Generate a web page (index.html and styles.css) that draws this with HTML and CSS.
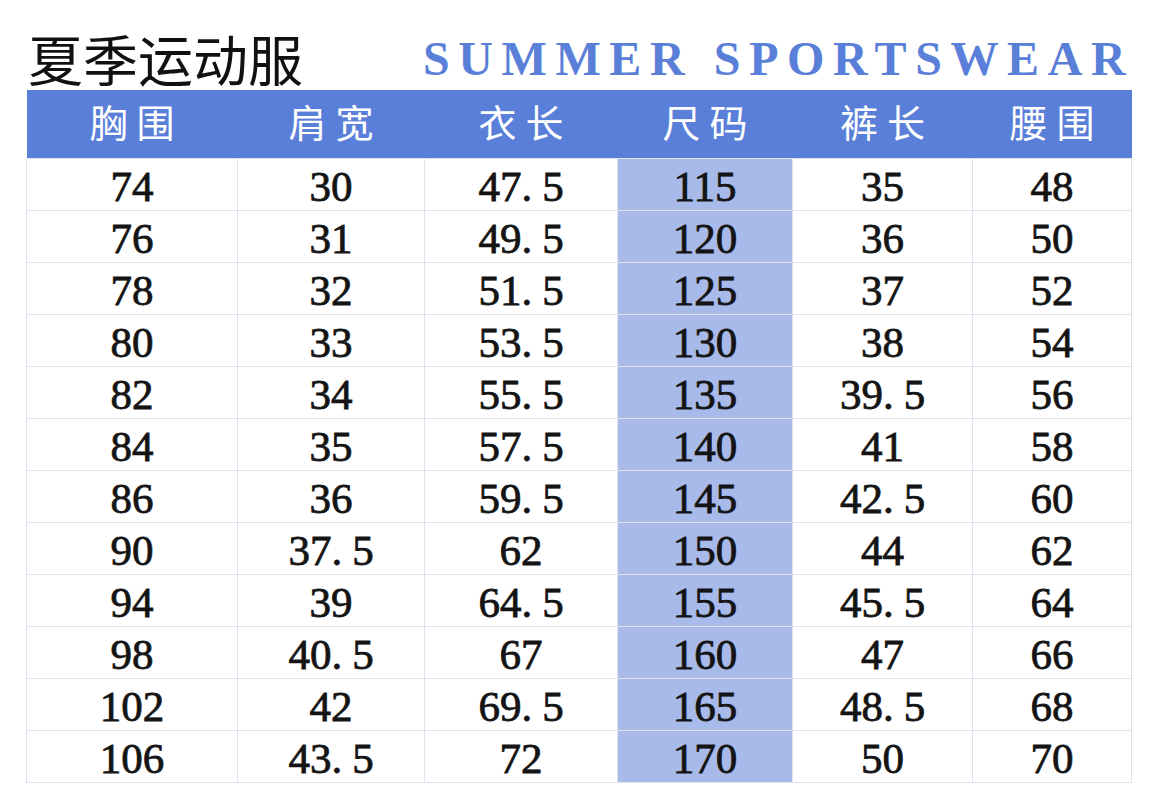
FILE: index.html
```html
<!DOCTYPE html>
<html lang="zh">
<head>
<meta charset="utf-8">
<title>夏季运动服 尺码表</title>
<link rel="stylesheet" href="styles.css">
</head>
<body>
<div class="page">
  <div class="titlebar">
    <h1 class="title-cn">夏季运动服</h1>
    <div class="title-en">SUMMER SPORTSWEAR</div>
  </div>
  <table class="sizes">
    <colgroup>
      <col class="c1"><col class="c2"><col class="c3"><col class="c4"><col class="c5"><col class="c6">
    </colgroup>
    <thead>
      <tr><th>胸围</th><th>肩宽</th><th>衣长</th><th>尺码</th><th>裤长</th><th>腰围</th></tr>
    </thead>
    <tbody>
      <tr><td>74</td><td>30</td><td>47<span class="dot">.</span>5</td><td class="size">115</td><td>35</td><td>48</td></tr>
      <tr><td>76</td><td>31</td><td>49<span class="dot">.</span>5</td><td class="size">120</td><td>36</td><td>50</td></tr>
      <tr><td>78</td><td>32</td><td>51<span class="dot">.</span>5</td><td class="size">125</td><td>37</td><td>52</td></tr>
      <tr><td>80</td><td>33</td><td>53<span class="dot">.</span>5</td><td class="size">130</td><td>38</td><td>54</td></tr>
      <tr><td>82</td><td>34</td><td>55<span class="dot">.</span>5</td><td class="size">135</td><td>39<span class="dot">.</span>5</td><td>56</td></tr>
      <tr><td>84</td><td>35</td><td>57<span class="dot">.</span>5</td><td class="size">140</td><td>41</td><td>58</td></tr>
      <tr><td>86</td><td>36</td><td>59<span class="dot">.</span>5</td><td class="size">145</td><td>42<span class="dot">.</span>5</td><td>60</td></tr>
      <tr><td>90</td><td>37<span class="dot">.</span>5</td><td>62</td><td class="size">150</td><td>44</td><td>62</td></tr>
      <tr><td>94</td><td>39</td><td>64<span class="dot">.</span>5</td><td class="size">155</td><td>45<span class="dot">.</span>5</td><td>64</td></tr>
      <tr><td>98</td><td>40<span class="dot">.</span>5</td><td>67</td><td class="size">160</td><td>47</td><td>66</td></tr>
      <tr><td>102</td><td>42</td><td>69<span class="dot">.</span>5</td><td class="size">165</td><td>48<span class="dot">.</span>5</td><td>68</td></tr>
      <tr><td>106</td><td>43<span class="dot">.</span>5</td><td>72</td><td class="size">170</td><td>50</td><td>70</td></tr>
    </tbody>
  </table>
</div>
</body>
</html>
```
FILE: styles.css
```css
html, body {
  margin: 0;
  padding: 0;
  background: #ffffff;
}

.page {
  width: 1160px;
  height: 805px;
  padding-left: 26px;
  box-sizing: border-box;
}

.titlebar {
  height: 90px;
  display: flex;
  align-items: flex-end;
  box-sizing: border-box;
  padding-bottom: 5px;
}

.title-cn {
  margin: 0 0 0 2px;
  font-family: "Noto Sans CJK SC", "Noto Sans", sans-serif;
  font-weight: 400;
  font-size: 55px;
  line-height: 55px;
  color: #111111;
  width: 395px;
}

.title-en {
  font-family: "Liberation Serif", "DejaVu Serif", serif;
  font-weight: 700;
  font-size: 48px;
  line-height: 48px;
  letter-spacing: 8.6px;
  color: #5a7fd8;
  white-space: nowrap;
  padding-bottom: 2px;
}

.sizes {
  border-collapse: collapse;
  table-layout: fixed;
  width: 1105px;
}

.c1 { width: 211px; }
.c2 { width: 187px; }
.c3 { width: 193px; }
.c4 { width: 175px; }
.c5 { width: 180px; }
.c6 { width: 159px; }

.sizes th {
  background: #5a7fd9;
  color: #ffffff;
  height: 68px;
  padding: 0 0 6px 0;
  box-sizing: border-box;
  font-family: "Noto Sans CJK SC", "Noto Sans", sans-serif;
  font-weight: 400;
  font-size: 38px;
  line-height: 40px;
  letter-spacing: 9px;
  text-indent: 9px;
  text-align: center;
  vertical-align: middle;
  border: none;
}

.sizes td {
  height: 52px;
  padding: 5px 0 0 0;
  box-sizing: border-box;
  border: 1.5px solid #dfe1ee;
  font-family: "Liberation Serif", "DejaVu Serif", serif;
  font-size: 43px;
  line-height: 46px;
  color: #141414;
  -webkit-text-stroke: 0.8px #141414;
  text-align: center;
  vertical-align: middle;
  white-space: nowrap;
}

.sizes td.size {
  background: #a8baea;
}

.dot {
  margin-right: 10px;
}
```
